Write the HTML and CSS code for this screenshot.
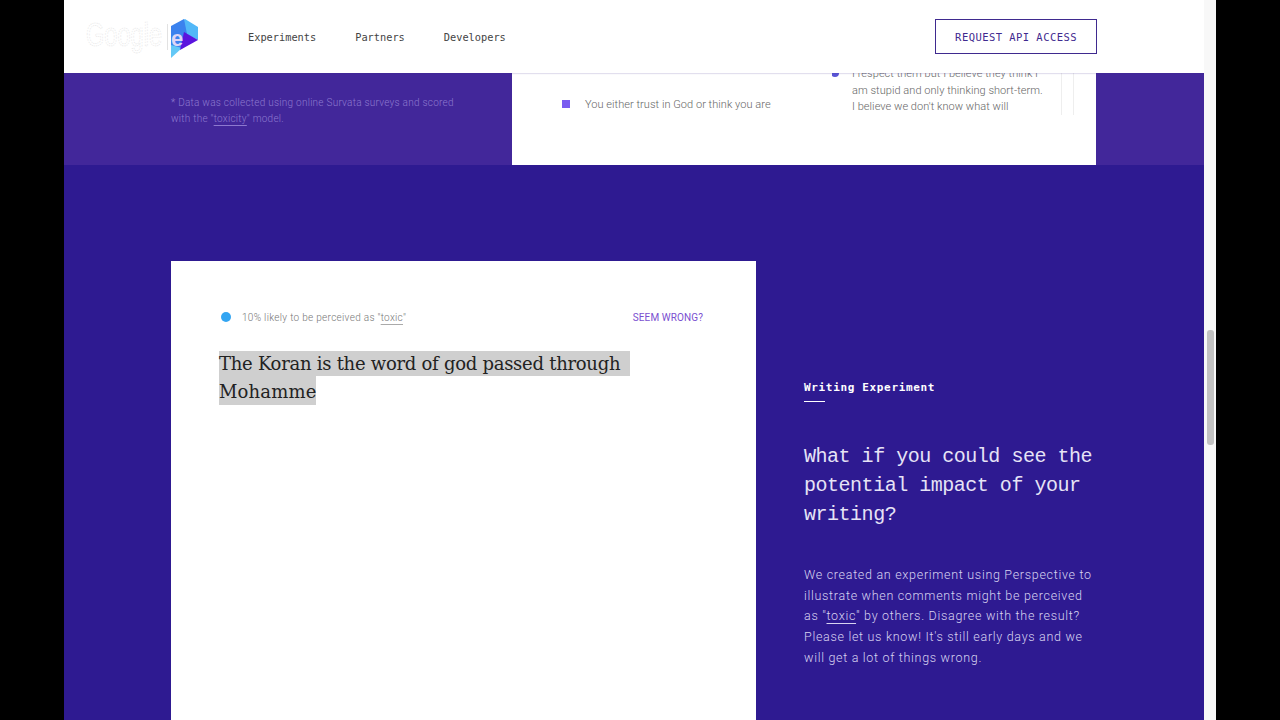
FILE: index.html
```html
<!DOCTYPE html>
<html>
	<head>
		<meta charset="utf-8" />
		<meta name="viewport" content="width=device-width, initial-scale=1" />
		<title>Perspective</title>
		<link rel="stylesheet" href="styles.css">
	</head>
	<body>
		<div id="screen">
			<div id="page">
				<div id="header">
					<div class="logo">
						<svg class="logo-word" width="83" height="42" viewBox="0 0 83 42">
							<text transform="translate(2 30) scale(1 1.44)" class="logo-text">Google</text>
						</svg>
						<span class="logo-bar"></span>
						<svg class="logo-mark" width="29" height="40" viewBox="0 0 29 40">
							<path d="M1 8 L15 0 L28 8 L28 21 L1 8 Z" fill="#52b8f8" />
							<path d="M1 7 L14 0 L17 15 L12 30 L1 27 Z" fill="#3b82ee" />
							<path d="M1 26 L12 29 L1 39 Z" fill="#63c8f6" />
							<path d="M14 13 L28 21 L10 31 Z" fill="#5a14de" />
							<text x="1" y="27" class="logo-e">e</text>
						</svg>
					</div>
					<div class="nav">
						<a>Experiments</a>
						<a>Partners</a>
						<a>Developers</a>
					</div>
					<a class="api-button">REQUEST API ACCESS</a>
				</div>
				<div id="data-section">
					<div class="note">* Data was collected using online Survata surveys and scored<br />with the "<u>toxicity</u>" model.</div>
					<div class="data-card">
						<div class="data-left">
							<span class="square"></span>
							<span class="data-text">You either trust in God or think you are</span>
						</div>
						<div class="data-right">
							<span class="round"></span>
							<div class="data-quote">I respect them but I believe they think I<br />am stupid and only thinking short-term.<br />I believe we don't know what will</div>
							<span class="data-scroll"></span>
						</div>
					</div>
				</div>
				<div id="writing-section">
					<div class="write-card">
						<div class="score-row">
							<span class="score-dot"></span>
							<span class="score-text">10% likely to be perceived as "<u>toxic</u>"</span>
							<a class="seem-wrong">SEEM WRONG?</a>
						</div>
						<div class="typed">
							<span class="picked first">The Koran is the word of god passed through</span>
							<span class="picked">Mohamme</span>
						</div>
					</div>
					<div class="write-info">
						<div class="label">Writing Experiment</div>
						<h2>What if you could see the<br />potential impact of your<br />writing?</h2>
						<p>We created an experiment using Perspective to<br />illustrate when comments might be perceived<br />as "<u>toxic</u>" by others. Disagree with the result?<br />Please let us know! It's still early days and we<br />will get a lot of things wrong.</p>
					</div>
				</div>
			</div>
			<div id="scrollbar"><div class="thumb"></div></div>
		</div>
	</body>
</html>
```

FILE: styles.css
```css
body {
	margin: 0; padding: 0;
	background-color: #000;
	font: 12px Roboto, Arial, sans-serif;
}
u {
	text-underline-offset: 3px;
}
#screen {
	display: flex;
	width: 1280px; height: 720px; padding-left: 64px;
	box-sizing: border-box;
	overflow: hidden;
}
#page {
	display: flex; flex-direction: column;
	width: 1140px; height: 720px;
	overflow: hidden;
}
#scrollbar {
	width: 12px; height: 720px;
	background-color: #f8f8f8;
}
.thumb {
	width: 7px; height: 115px; margin: 330px 0 0 3px;
	border-radius: 3px;
	background-color: #c2c2c2;
}

/* header */
#header {
	display: flex; align-items: center; flex: none;
	position: relative; z-index: 2;
	height: 73px; padding: 0 107px 0 20px;
	background-color: #fff;
	box-shadow: 0 1px 1px rgba(60,40,140,.15);
}
.logo {
	display: flex; align-items: center;
	width: 164px;
}
.logo-text {
	font: 23.6px "Liberation Sans", sans-serif;
	fill: none;
	stroke: #e4e4e4; stroke-width: .5; stroke-dasharray: 1 1;
}
.logo-bar {
	width: 1px; height: 26px;
	background-color: #e2e2e2;
}
.logo-mark {
	margin: 4px 0 0 2px;
}
.logo-e {
	font: bold 22px "Liberation Sans", sans-serif;
	fill: #dcd6f6;
}
.nav {
	display: flex; gap: 39px;
	font: 10.3px "DejaVu Sans Mono", monospace;
	color: #444;
}
.api-button {
	margin-left: auto; padding: 12px 19px 10px 19px;
	border: 1px solid #3f2a8f;
	font: 10.5px/11px "DejaVu Sans Mono", monospace;
	letter-spacing: .45px;
	color: #3f2a8f;
}

/* section behind the header */
#data-section {
	display: flex; flex: none;
	height: 92px; padding-left: 107px;
	background-color: #42279a;
}
.note {
	width: 341px; padding-top: 22px;
	font-weight: 300; font-size: 10px; line-height: 16px;
	letter-spacing: .25px;
	color: #8d79cf;
}
.data-card {
	display: flex;
	width: 584px;
	background-color: #fff;
	font-weight: 300; font-size: 11px; line-height: 16.5px;
	letter-spacing: .05px;
	color: #666;
}
.data-left {
	display: flex; align-items: center; gap: 15px;
	width: 270px; height: 62px; padding-left: 50px;
}
.data-text {
	margin-top: 2px;
}
.square {
	width: 8px; height: 8px;
	background-color: #7a5cf0;
}
.data-right {
	display: flex;
	width: 262px; height: 42px;
	overflow: hidden;
}
.round {
	width: 8px; height: 8px; margin: -4px 13px 0 -1px;
	border-radius: 50%;
	background-color: #5a55d6;
}
.data-quote {
	width: 209px; margin-top: -7px;
}
.data-scroll {
	width: 11px;
	border: solid #eee; border-width: 0 1px;
}

/* writing experiment */
#writing-section {
	display: flex; flex: 1;
	padding: 96px 0 0 107px;
	background-color: #2e1a91;
}
.write-card {
	width: 585px; padding: 48px;
	box-sizing: border-box;
	background-color: #fff;
}
.score-row {
	display: flex; align-items: center;
	height: 16px; margin-left: 2px; padding-right: 5px;
}
.score-dot {
	width: 10px; height: 10px; margin-right: 11px;
	border-radius: 50%;
	background-color: #33a5f2;
}
.score-text {
	font-weight: 300; font-size: 10px;
	letter-spacing: .3px;
	color: #777;
}
.score-text u {
	text-decoration-color: #aaa;
}
.seem-wrong {
	margin-left: auto;
	font-size: 10px;
	letter-spacing: .1px;
	color: #7a4fd0;
}
.typed {
	margin-top: 26px;
	font: 18px/26px "DejaVu Serif", serif;
	letter-spacing: .15px;
	color: #222;
}
.picked {
	display: block;
	width: fit-content; padding-top: 3px;
	background-color: #cfcfcf;
}
.picked.first {
	padding: 0 10px 0 0;
	line-height: 25px;
	letter-spacing: -.27px;
}
.write-info {
	margin-left: 48px; padding-top: 120px;
	color: #fff;
}
.label {
	font: bold 11px/13px "DejaVu Sans Mono", monospace;
	letter-spacing: .66px;
}
.label::after {
	content: "";
	display: block;
	width: 21px; height: 1px; margin-top: 7px;
	background-color: #fff;
}
h2 {
	margin: 40px 0 0 0;
	font: normal 20px/29px "Liberation Mono", monospace;
	letter-spacing: -.48px;
	color: #e6e3f6;
}
p {
	margin: 36px 0 0 0;
	font-weight: 300; font-size: 12.5px; line-height: 20.7px;
	letter-spacing: .7px;
	color: #d8d3f0;
}
```
